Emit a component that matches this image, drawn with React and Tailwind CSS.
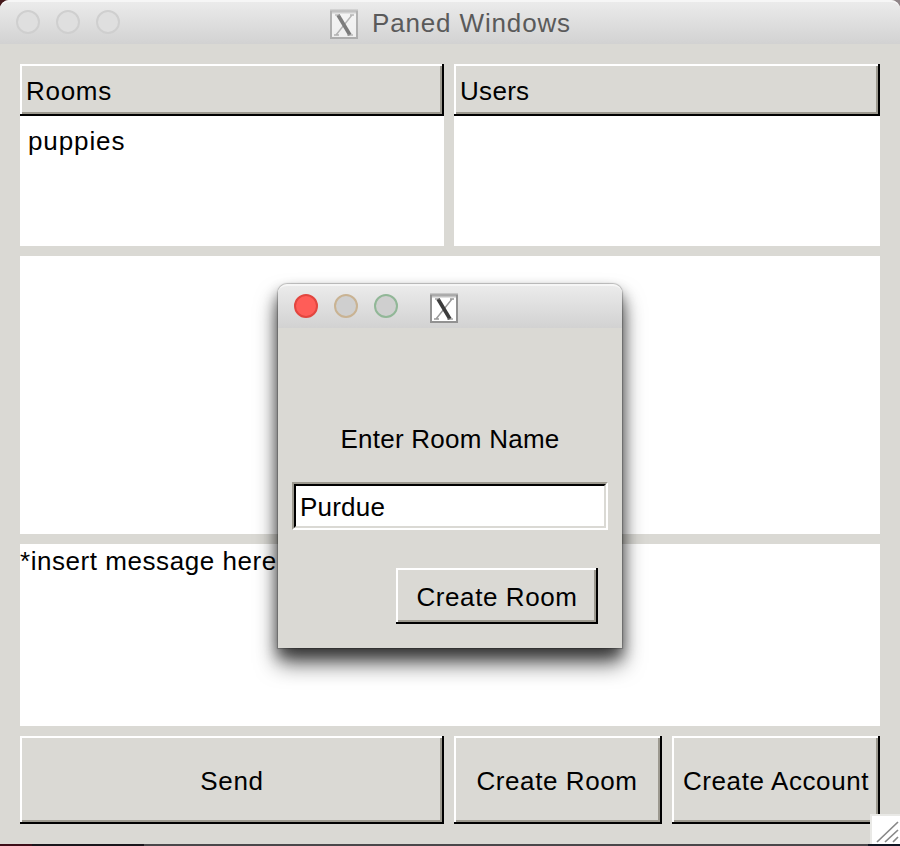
const raised =
  "relative bg-[#dad9d4] shadow-[inset_-2px_0_0_#000,inset_0_-2px_0_#000,inset_2px_2px_0_#fff,inset_-4px_-4px_0_#9c998f]";

function XIcon({ className }) {
  return (
    <svg className={className} width="28" height="30" viewBox="0 0 28 30" fill="none">
      <rect width="28" height="3" fill="#c6c6c6" />
      <rect x="1" y="2.5" width="26" height="26.5" fill="#fff" stroke="#929292" strokeWidth="2" />
      <path d="M2 3.5h24" stroke="#c2c2c2" strokeWidth="2" />
      <path d="M22 6L6 26M4 26h5M20 6h4" stroke="#999" strokeWidth="1.4" />
      <path d="M8 6L20 26" stroke="#3c3c3c" strokeWidth="3.6" />
      <path d="M5 6h5M17 26h6" stroke="#777" strokeWidth="1" />
    </svg>
  );
}

function Light({ className }) {
  return <span className={`size-6 rounded-full border-2 ${className}`} />;
}

function Header({ children, spacing }) {
  return (
    <div className={`${raised} flex h-[52px] shrink-0 items-center pl-1.5`}>
      <span className={`relative top-px ${spacing}`}>{children}</span>
    </div>
  );
}

function Button({ className, children }) {
  return (
    <button className={`${raised} flex items-center justify-center whitespace-nowrap pt-0.5 ${className}`}>
      {children}
    </button>
  );
}

function Dialog() {
  return (
    <section className="absolute left-[278px] top-[284px] flex h-[364px] w-[344px] flex-col rounded-t-[9px] bg-[#dad9d4] shadow-[0_0_1px_1px_rgba(0,0,0,0.22),0_15px_22px_rgba(0,0,0,0.65),0_8px_14px_rgba(0,0,0,0.45)]">
      <header className="flex h-11 shrink-0 items-start gap-4 rounded-t-[9px] border-t-2 border-[#f6f6f6] bg-linear-to-b from-[#ebebeb] to-[#d2d2d2] pl-4 pt-2">
        <Light className="border-[#e2463f] bg-[#ff5d58]" />
        <Light className="border-[#c9b393] bg-[#cfcfcf]" />
        <Light className="border-[#91b797] bg-[#cfcfcf]" />
        <XIcon className="-mt-px ml-4" />
      </header>
      <label className="mt-24 text-center leading-[30px] tracking-[0.25px]">Enter Room Name</label>
      <div className="ml-3.5 mt-7 h-12 w-[316px] border-2 border-t-[#9c998f] border-l-[#9c998f] border-r-white border-b-white">
        <div className="flex h-full items-center border-2 border-t-black border-l-black border-r-[#dad9d4] border-b-[#dad9d4] bg-white pl-1 tracking-[0.2px]">
          <span className="relative top-px">Purdue</span>
        </div>
      </div>
      <Button className="ml-[118px] mt-[38px] h-14 w-[202px] tracking-[0.6px]">Create Room</Button>
    </section>
  );
}

export default function App() {
  return (
    <div className="relative h-[846px] w-[900px] overflow-hidden bg-[#49474a] font-['Liberation_Sans',Arial,sans-serif] text-[26px] leading-[30px] text-black">
      <div className="absolute left-0 top-0 h-3 w-3 bg-[#45191c]" />
      <div className="absolute right-0 top-0 h-3 w-3 bg-[#8f8487]" />
      <main className="relative flex h-[844px] flex-col rounded-t-[9px] bg-[#dad9d4]">
        <header className="flex h-11 shrink-0 items-start rounded-t-[9px] border-t-2 border-[#f6f6f6] bg-linear-to-b from-[#ebebeb] to-[#d2d2d2] pl-4 pt-2">
          <div className="flex gap-4">
            <Light className="border-[#cfcfcf] bg-[#dfdfdf]" />
            <Light className="border-[#cfcfcf] bg-[#dfdfdf]" />
            <Light className="border-[#cfcfcf] bg-[#dfdfdf]" />
          </div>
          <XIcon className="-mt-px ml-[210px] opacity-60" />
          <h1 className="-mt-0.5 ml-3.5 tracking-[0.85px] text-[#5a5a5a]">Paned Windows</h1>
        </header>

        <div className="flex grow flex-col gap-2.5 px-5 pb-5 pt-5">
          <div className="grid h-[182px] grid-cols-[424px_426px] gap-2.5">
            <section className="flex flex-col bg-white">
              <Header spacing="tracking-[0.7px]">Rooms</Header>
              <p className="pl-2 pt-2.5 tracking-[0.9px]">puppies</p>
            </section>
            <section className="flex flex-col bg-white">
              <Header spacing="tracking-[0.3px]">Users</Header>
            </section>
          </div>
          <div className="h-[278px] bg-white" />
          <div className="h-[182px] bg-white pt-0.5 tracking-[0.55px]">*insert message here</div>
          <div className="flex h-[88px] gap-2.5">
            <Button className="w-[424px] tracking-[0.7px]">Send</Button>
            <Button className="w-[208px] pr-0.5 tracking-[0.6px]">Create Room</Button>
            <Button className="w-[208px] tracking-[0.6px]">Create Account</Button>
          </div>
        </div>

        <svg className="absolute bottom-0 right-0" width="30" height="30" viewBox="0 0 30 30" fill="none">
          <path d="M0 0h30v30H0z" fill="#e9e9e6" />
          <path d="M2 2h28v28H2z" fill="#fff" />
          <path d="M7 28L28 8M15 28L28 16M23 28L28 23" stroke="#888" strokeWidth="1.7" />
        </svg>
      </main>
      <div className="flex h-0.5">
        <div className="w-8 bg-[#3c0d17]" />
        <div className="w-28 bg-[#19151b]" />
        <div className="grow" />
        <div className="w-8 bg-[#101623]" />
      </div>
      <Dialog />
    </div>
  );
}
